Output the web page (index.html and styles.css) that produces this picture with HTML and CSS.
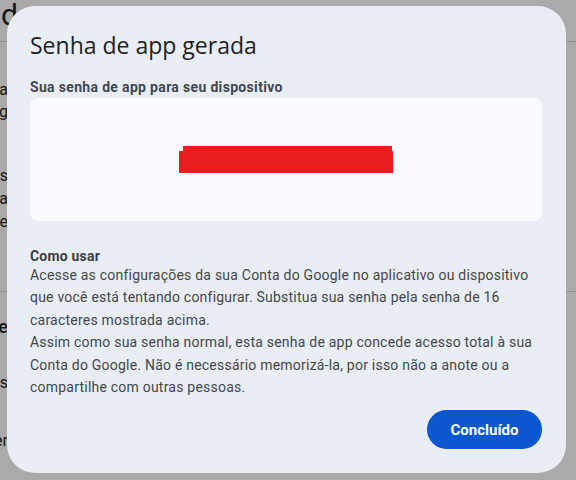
FILE: index.html
```html
<!DOCTYPE html>
<html lang="pt-BR">
<head>
<meta charset="utf-8">
<title>Senha de app gerada</title>
<link rel="stylesheet" href="styles.css">
</head>
<body>
<div class="page">
  <div class="page-head"><span class="brand">d</span></div>
  <div class="page-side">
    <div class="side-upper">
      <span class="w w1">para</span>
      <span class="w w2">Goog</span>
      <span class="w w3">apps</span>
      <span class="w w4">conta</span>
      <span class="w w5">de</span>
    </div>
    <div class="side-lower">
      <span class="w w6">Senhae</span>
      <span class="w w7">Apps</span>
      <span class="w w8">Nomeer</span>
    </div>
  </div>
</div>

<div class="dialog" role="dialog" aria-labelledby="dlg-title">
  <h1 class="dialog-title" id="dlg-title">Senha de app gerada</h1>
  <p class="field-label">Sua senha de app para seu dispositivo</p>
  <div class="pw-box">
    <div class="pw-redact">
      <span class="redact-top"></span>
      <span class="redact-main"></span>
    </div>
  </div>
  <div class="howto">
    <p class="howto-title">Como usar</p>
    <p class="howto-text">Acesse as configurações da sua Conta do Google no aplicativo ou dispositivo<br>que você está tentando configurar. Substitua sua senha pela senha de 16<br>caracteres mostrada acima.<br>Assim como sua senha normal, esta senha de app concede acesso total à sua<br>Conta do Google. Não é necessário memorizá-la, por isso não a anote ou a<br>compartilhe com outras pessoas.</p>
  </div>
  <div class="actions">
    <button class="btn-done" type="button">Concluído</button>
  </div>
</div>
</body>
</html>
```

FILE: styles.css
```css
html, body {
  margin: 0;
  padding: 0;
  width: 576px;
  height: 480px;
  overflow: hidden;
  background: #aaaaaa;
  font-family: Roboto, "Liberation Sans", Arial, sans-serif;
}

.page {
  width: 576px;
  height: 480px;
  display: flex;
  flex-direction: column;
}

.page-head {
  height: 41px;
  border-bottom: 1px solid #8f8f8f;
  display: flex;
  align-items: flex-start;
  overflow: hidden;
}

.brand {
  font-size: 30px;
  line-height: 30px;
  color: #161616;
  margin-left: 1px;
}

.page-side {
  width: 8px;
  display: flex;
  flex-direction: column;
}

.side-upper {
  display: flex;
  flex-direction: column;
  align-items: flex-start;
  color: #161616;
  font-size: 16px;
  height: 250px;
  border-bottom: 1px solid #8f8f8f;
  width: 576px;
  box-sizing: border-box;
}

.side-lower {
  display: flex;
  flex-direction: column;
  color: #161616;
  font-size: 16px;
}

.w {
  width: 8px;
  display: flex;
  justify-content: flex-end;
  white-space: nowrap;
  line-height: 20px;
}

.w1 { margin-top: 38px; }
.w2 { margin-top: 2px; }
.w3 { margin-top: 44px; }
.w4 { margin-top: 3px; }
.w5 { margin-top: 3px; }
.w6 { margin-top: 25px; font-size: 18px; font-weight: 500; }
.w7 { margin-top: 36px; }
.w8 { margin-top: 38px; }

.dialog {
  position: absolute;
  left: 7px;
  top: 6px;
  width: 559px;
  height: 467px;
  box-sizing: border-box;
  border-radius: 28px;
  background: #e9eef6;
  padding: 23px 24px 24px 23px;
  display: flex;
  flex-direction: column;
}

.dialog-title {
  margin: 0;
  font-family: "Open Sans", Roboto, sans-serif;
  font-weight: 400;
  font-size: 23px;
  line-height: 32px;
  color: #1f1f1f;
  letter-spacing: 0;
}

.field-label {
  margin: 16px 0 0;
  font-size: 14px;
  line-height: 20px;
  font-weight: 700;
  color: #444746;
  letter-spacing: 0.33px;
}

.pw-box {
  margin-top: 1px;
  height: 123px;
  border-radius: 8px;
  background: #f8fafd;
  display: flex;
  align-items: center;
  justify-content: center;
}

.pw-redact {
  width: 214px;
  height: 27px;
  display: flex;
  flex-direction: column;
  align-items: flex-start;
  margin-left: 0;
}

.redact-top {
  width: 209px;
  height: 5px;
  margin-left: 4px;
  background: #e61e1e;
}

.redact-main {
  width: 214px;
  height: 22px;
  background: #e61e1e;
}

.howto {
  margin-top: 25px;
  color: #444746;
  font-size: 14px;
}

.howto-title {
  margin: 0;
  font-weight: 700;
  line-height: 20px;
  color: #3c3f41;
  letter-spacing: 0.2px;
}

.howto-text {
  margin: -2px 0 0;
  line-height: 22.4px;
  letter-spacing: 0.22px;
}

.actions {
  margin-top: auto;
  display: flex;
  justify-content: flex-end;
}

.btn-done {
  width: 115px;
  height: 39px;
  border: none;
  border-radius: 20px;
  background: #0b57d0;
  color: #ffffff;
  font-family: Roboto, sans-serif;
  font-size: 15px;
  font-weight: 700;
  padding: 0;
}
```
